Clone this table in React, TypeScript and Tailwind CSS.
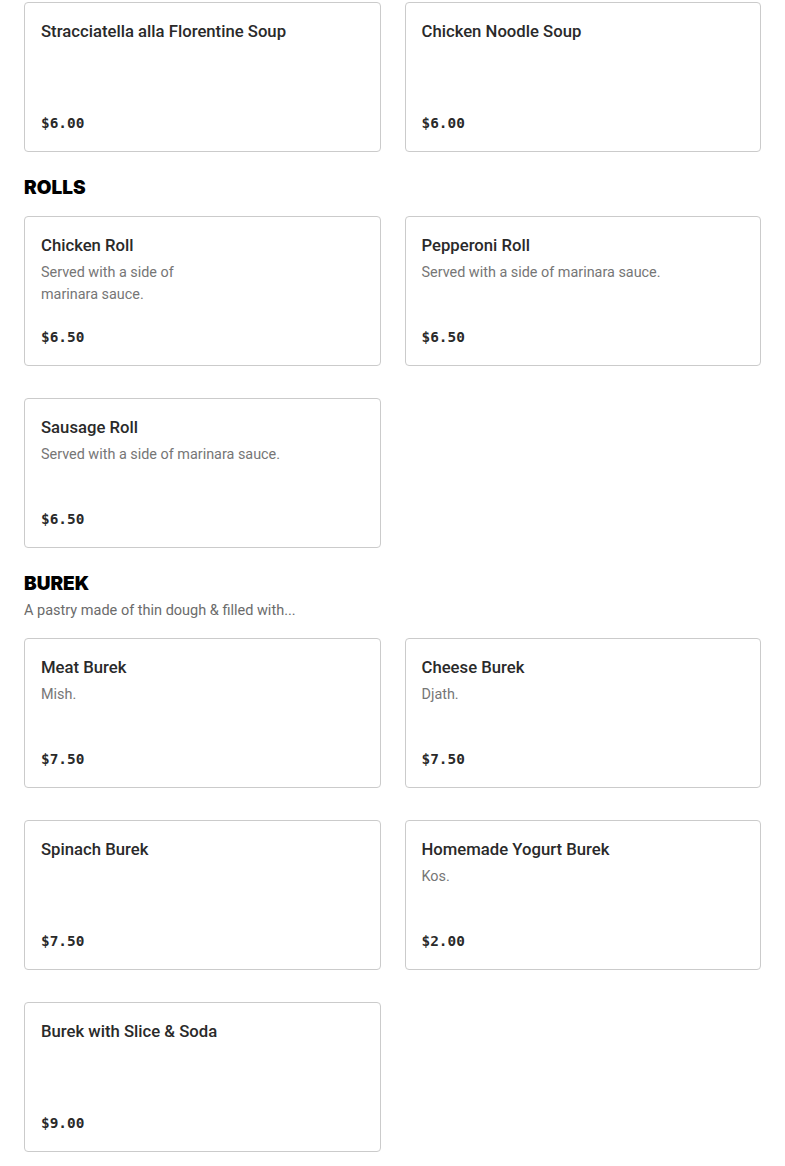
type Item = { name: string; desc?: string; price: string; narrow?: boolean };

type Section = { title?: string; blurb?: string; items: Item[] };

const sections: Section[] = [
  {
    items: [
      { name: "Stracciatella alla Florentine Soup", price: "$6.00" },
      { name: "Chicken Noodle Soup", price: "$6.00" },
    ],
  },
  {
    title: "ROLLS",
    items: [
      { name: "Chicken Roll", desc: "Served with a side of marinara sauce.", price: "$6.50", narrow: true },
      { name: "Pepperoni Roll", desc: "Served with a side of marinara sauce.", price: "$6.50" },
      { name: "Sausage Roll", desc: "Served with a side of marinara sauce.", price: "$6.50" },
    ],
  },
  {
    title: "BUREK",
    blurb: "A pastry made of thin dough & filled with...",
    items: [
      { name: "Meat Burek", desc: "Mish.", price: "$7.50" },
      { name: "Cheese Burek", desc: "Djath.", price: "$7.50" },
      { name: "Spinach Burek", price: "$7.50" },
      { name: "Homemade Yogurt Burek", desc: "Kos.", price: "$2.00" },
      { name: "Burek with Slice & Soda", price: "$9.00" },
    ],
  },
];

function MenuCard({ item }: { item: Item }) {
  return (
    <div className="h-[150px] flex flex-col justify-between rounded-[4px] border border-[#cbcbcb] bg-white px-4 pt-[17px] pb-4">
      <div>
        <h3 className="text-[16.7px] leading-6 font-medium text-[#2a2a2a] font-['Roboto',sans-serif]">
          {item.name}
        </h3>
        {item.desc && (
          <p
            className={`mt-1 text-[14.4px] leading-[22px] text-[#767676] font-['Roboto',sans-serif] ${
              item.narrow ? "max-w-[180px]" : ""
            }`}
          >
            {item.desc}
          </p>
        )}
      </div>
      <span className="text-[14.4px] leading-6 font-bold text-[#2a2a2a] font-['DejaVu_Sans_Mono',monospace]">
        {item.price}
      </span>
    </div>
  );
}

export default function App() {
  return (
    <div className="w-[785px] bg-white px-6 pt-[2px] pb-4">
      {sections.map((s, i) => (
        <section key={i}>
          {s.title && (
            <h2 className="mt-6 text-[19px] leading-6 font-black text-black font-['Inter',sans-serif]">
              {s.title}
            </h2>
          )}
          {s.blurb && (
            <p className="mt-[5px] text-[14.5px] leading-5 text-[#6b6b6b] font-['Roboto',sans-serif]">{s.blurb}</p>
          )}
          <div className={`grid grid-cols-2 gap-x-6 gap-y-8 ${s.title ? (s.blurb ? "mt-[17px]" : "mt-4") : ""}`}>
            {s.items.map((it) => (
              <MenuCard key={it.name} item={it} />
            ))}
          </div>
        </section>
      ))}
    </div>
  );
}
